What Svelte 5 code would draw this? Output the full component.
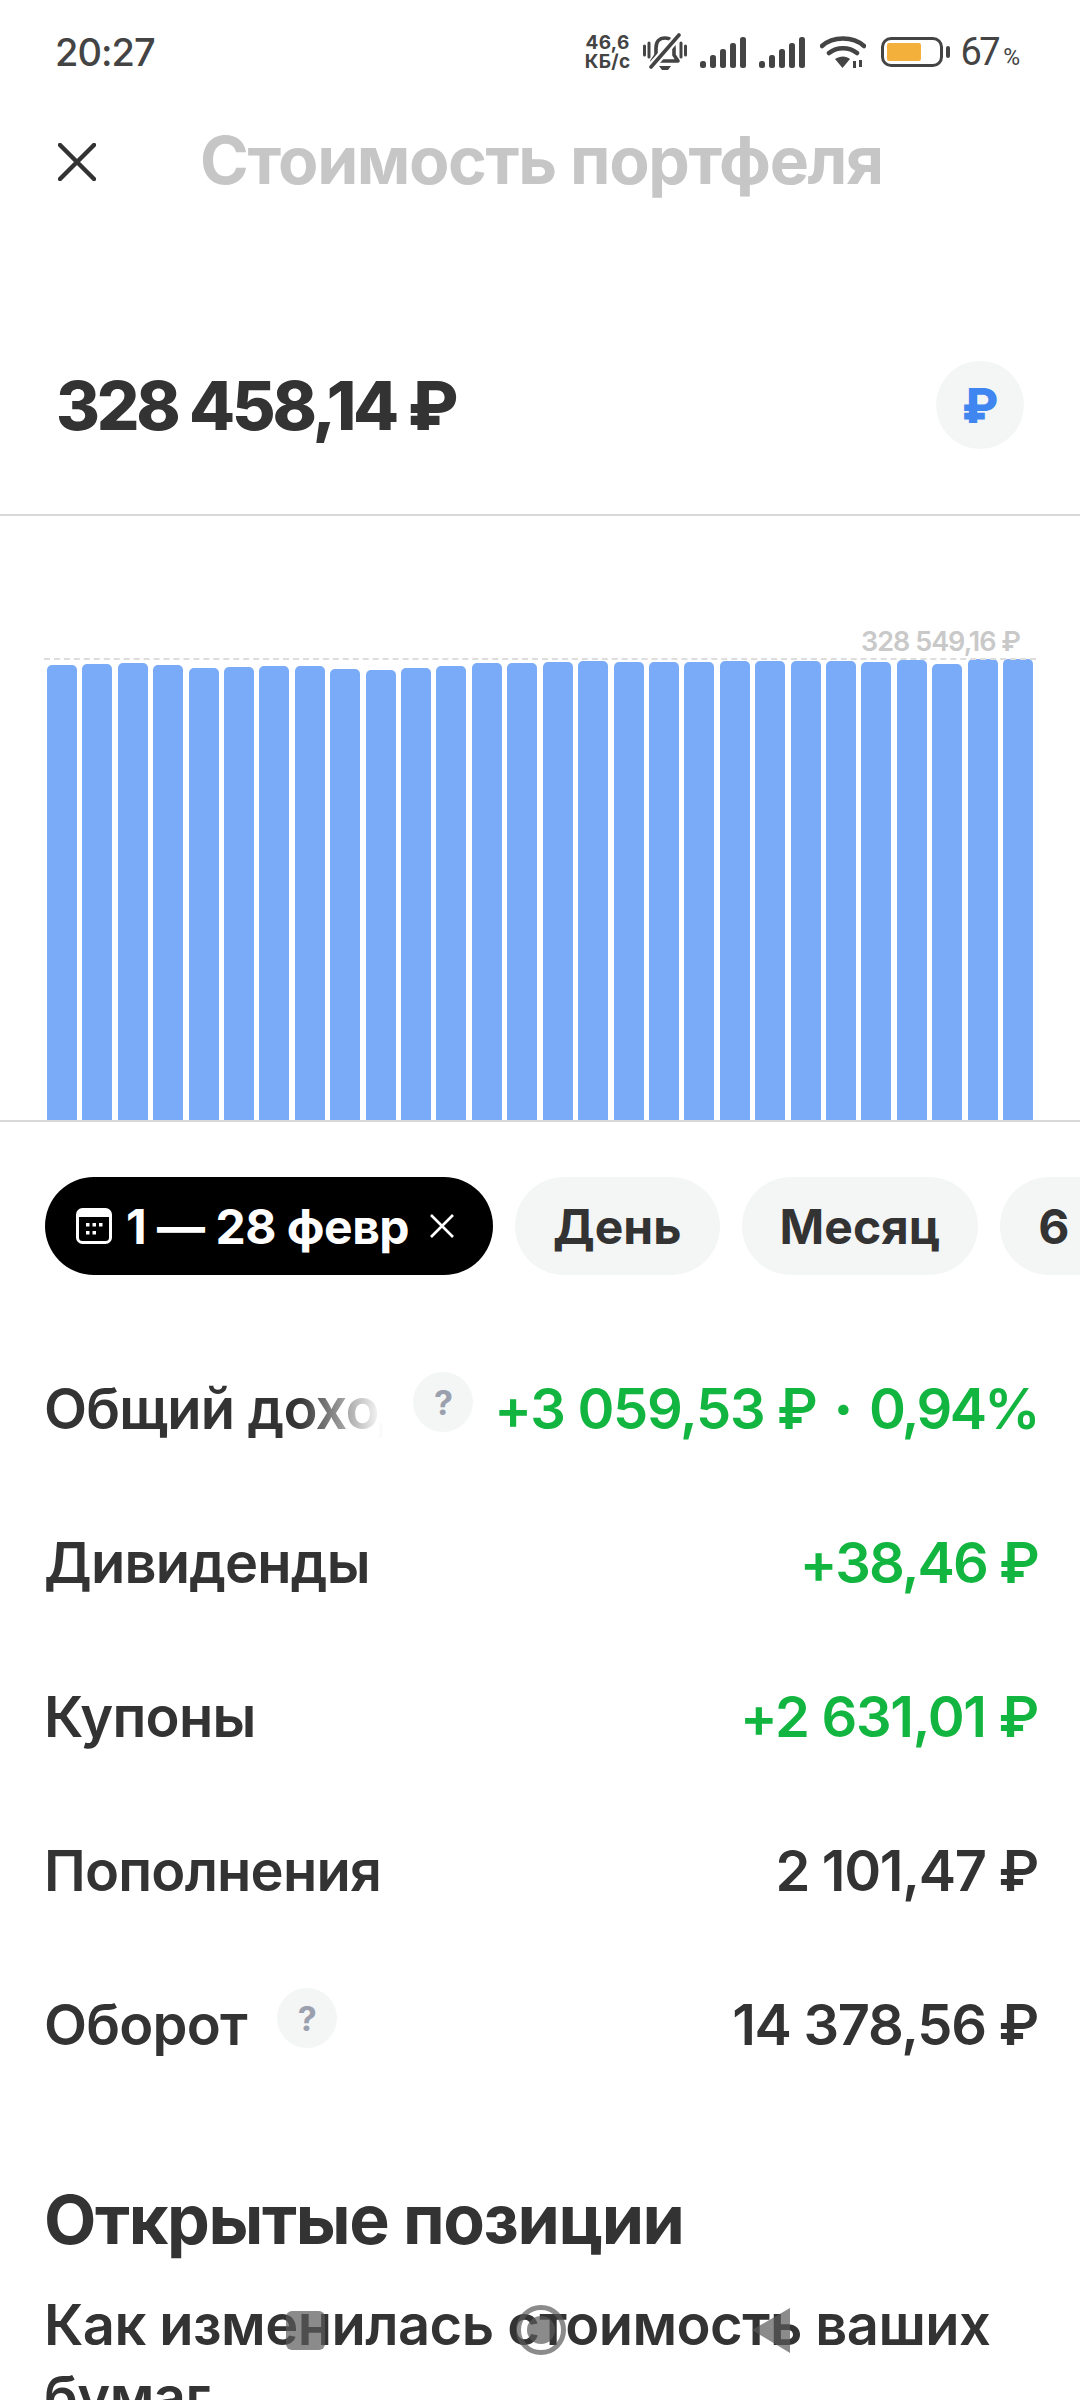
<script lang="ts">
// daily portfolio value, one bar per day: top of bar in px below chart start
const tops = [7, 6.3, 5, 7, 9.7, 9, 8, 8, 11, 11.7, 10, 8.3, 5, 4.7, 4, 3, 4.3, 3.7, 4, 3, 3.3, 3, 3, 4, 1.7, 6, 1, 1];
const chartHeight = 462;

const rows = [
	{ label: 'Общий доход', value: '+3 059,53 ₽', percent: '0,94%', green: true, help: true, fade: true },
	{ label: 'Дивиденды', value: '+38,46 ₽', green: true, tight: true },
	{ label: 'Купоны', value: '+2 631,01 ₽', green: true },
	{ label: 'Пополнения', value: '2 101,47 ₽' },
	{ label: 'Оборот', value: '14 378,56 ₽', help: true }
];
</script>

<div class="screen">
	<div class="status">
		<span class="time">20:27</span>
		<div class="status-icons">
			<span class="speed"><span>46,6</span><span>КБ/с</span></span>
			<svg class="bell" width="44" height="38" viewBox="0 0 44 38">
				<path d="M22 5c-6 0-9 4-9 10v7l-4 6h26l-4-6v-7c0-6-3-10-9-10z" fill="none" stroke="#444" stroke-width="3.6" stroke-linejoin="round" />
				<path d="M16 33h12l-3 4h-6z" fill="#444" />
				<path d="M1.500 13v9M6 10v14M38 10v14M42.500 13v9" stroke="#444" stroke-width="3" stroke-linecap="round" />
				<path d="M8 34 36 2" stroke="#fff" stroke-width="8" />
				<path d="M8 34 36 2" stroke="#444" stroke-width="3.600" stroke-linecap="round" />
			</svg>
			<svg class="signal" width="46" height="31" viewBox="0 0 46 31">
				<rect x="0" y="24" width="6" height="7" rx="2.500" /><rect x="10" y="18" width="6" height="13" rx="2.500" /><rect x="20" y="12" width="6" height="19" rx="2.500" /><rect x="30" y="6" width="6" height="25" rx="2.500" /><rect x="40" y="0" width="6" height="31" rx="2.500" />
			</svg>
			<svg class="signal" width="46" height="31" viewBox="0 0 46 31">
				<rect x="0" y="24" width="6" height="7" rx="2.500" /><rect x="10" y="18" width="6" height="13" rx="2.500" /><rect x="20" y="12" width="6" height="19" rx="2.500" /><rect x="30" y="6" width="6" height="25" rx="2.500" /><rect x="40" y="0" width="6" height="31" rx="2.500" />
			</svg>
			<svg class="wifi" width="46" height="33" viewBox="0 0 46 33">
				<path d="M2 10C13 0 33 0 44 10M9 17c8-6.500 20-6.500 28 0" fill="none" stroke="#444" stroke-width="4.500" stroke-linecap="round" />
				<path d="M15 23c5-3.500 11-3.500 15 0l-7.500 9z" fill="#444" />
				<path d="M33 25h3v7h-3zM39 24h3v7h-3z" fill="#444" />
			</svg>
			<div class="battery"><div class="battery-level"></div></div>
			<span class="battery-nub"></span>
			<span class="percent">67<small>%</small></span>
		</div>
	</div>

	<header class="header">
		<svg class="close" width="38" height="38" viewBox="0 0 38 38">
			<path d="M2 2 36 36M36 2 2 36" stroke="#333" stroke-width="4.500" stroke-linecap="round" />
		</svg>
		<h1>Стоимость портфеля</h1>
	</header>

	<section class="total">
		<span class="total-value">328 458,14 ₽</span>
		<span class="currency">₽</span>
	</section>

	<section class="chart">
		<div class="max-label">328 549,16 ₽</div>
		<div class="max-line"></div>
		<div class="bars" style:height="{chartHeight}px">
			{#each tops as top}
				<div class="bar" style:height="{chartHeight - top}px"></div>
			{/each}
		</div>
	</section>

	<nav class="periods">
		<button class="pill active">
			<svg width="36" height="36" viewBox="0 0 36 36">
				<rect x="1.500" y="1.500" width="33" height="33" rx="5" fill="none" stroke="#fff" stroke-width="3" />
				<path d="M2 3h32v6H2z" fill="#fff" />
				<g fill="#fff"><rect x="10" y="15" width="3.500" height="3.500" /><rect x="16.500" y="15" width="3.500" height="3.500" /><rect x="23" y="15" width="3.500" height="3.500" /><rect x="10" y="23" width="3.500" height="3.500" /><rect x="16.500" y="23" width="3.500" height="3.500" /></g>
			</svg>
			<span>1 — 28 февр</span>
			<svg class="pill-close" width="26" height="26" viewBox="0 0 26 26">
				<path d="M2 2 24 24M24 2 2 24" stroke="#fff" stroke-width="2.600" />
			</svg>
		</button>
		<button class="pill">День</button>
		<button class="pill">Месяц</button>
		<button class="pill">6 месяцев</button>
	</nav>

	<section class="rows">
		{#each rows as row}
			<div class="row">
				<div class="row-label">
					<span class:fade={row.fade}>{row.label}</span>
					{#if row.help}<span class="help">?</span>{/if}
				</div>
				<span class="row-value" class:green={row.green} class:tight={row.tight}>
					{row.value}{#if row.percent}<span class="dot">·</span><span class="pct">{row.percent}</span>{/if}
				</span>
			</div>
		{/each}
	</section>

	<section class="positions">
		<h2>Открытые позиции</h2>
		<p>Как изменилась стоимость ваших бумаг</p>
	</section>

	<div class="nav-buttons">
		<span class="nav-square"></span>
		<span class="nav-circle"><span></span></span>
		<svg class="nav-back" width="38" height="45" viewBox="0 0 38 45"><path d="M38 0v45L0 22z" /></svg>
	</div>
</div>

<style>
	:global(body) {
		margin: 0;
		background: #fff;
	}

	.screen {
		position: relative;
		width: 1080px;
		height: 2400px;
		overflow: hidden;
		background: #fff;
		color: #333;
		font-family: Inter, 'Noto Sans', 'DejaVu Sans', sans-serif;
	}

	.status {
		display: flex;
		justify-content: space-between;
		align-items: center;
		height: 104px;
		padding: 0 60px 0 55px;
		box-sizing: border-box;
	}

	.time {
		font-size: 38px;
		font-weight: 500;
		color: #444;
		letter-spacing: -1px;
	}

	.status-icons {
		display: flex;
		align-items: center;
		color: #444;
	}

	.speed {
		display: flex;
		flex-direction: column;
		align-items: center;
		font-size: 19px;
		font-weight: 700;
		letter-spacing: 0.300px;
		line-height: 19px;
		margin-right: 13px;
	}

	.bell {
		margin-right: 13px;
	}

	.signal {
		fill: #444;
		margin-right: 13px;
	}

	.wifi {
		margin-left: 2px;
		margin-right: 15px;
	}

	.battery {
		width: 62px;
		height: 30px;
		box-sizing: border-box;
		border: 3.500px solid #444;
		border-radius: 10px;
		padding: 3px;
	}

	.battery-level {
		width: 34px;
		height: 100%;
		background: #f3b13c;
		border-radius: 2px;
	}

	.battery-nub {
		width: 4px;
		height: 12px;
		margin-left: 3px;
		border-radius: 2px;
		background: #444;
	}

	.percent {
		margin-left: 10px;
		font-family: Roboto, sans-serif;
		font-size: 38px;
		font-weight: 400;
		letter-spacing: -2.500px;
	}

	.percent small {
		font-size: 23px;
		margin-left: 5px;
		letter-spacing: 0;
	}

	.header {
		display: flex;
		align-items: center;
		height: 116px;
		padding-left: 58px;
	}

	h1 {
		margin: 0 0 0 104px;
		padding-bottom: 4px;
		font-size: 66px;
		font-weight: 700;
		letter-spacing: -1.400px;
		color: #c6c6c6;
		white-space: nowrap;
	}

	.total {
		display: flex;
		justify-content: space-between;
		align-items: center;
		height: 296px;
		padding: 76px 56px 0 56px;
		box-sizing: border-box;
		border-bottom: 2px solid #d8d8d8;
	}

	.total-value {
		font-size: 67px;
		font-weight: 800;
		letter-spacing: -3.200px;
		white-space: nowrap;
	}

	.currency {
		display: flex;
		align-items: center;
		justify-content: center;
		width: 88px;
		height: 88px;
		border-radius: 50%;
		background: #f4f6f6;
		color: #3f86f0;
		font-size: 48px;
		font-weight: 800;
	}

	.chart {
		position: relative;
		display: flex;
		align-items: flex-end;
		height: 606px;
		padding: 0 47px;
		box-sizing: border-box;
		border-bottom: 2px solid #d8d8d8;
	}

	.max-label {
		position: absolute;
		right: 60px;
		top: 109px;
		font-size: 27px;
		font-weight: 600;
		letter-spacing: -1px;
		color: #c9c9c9;
		white-space: nowrap;
	}

	.max-line {
		position: absolute;
		left: 44px;
		right: 44px;
		top: 142px;
		border-top: 2px dashed #ddd;
	}

	.bars {
		display: flex;
		align-items: flex-end;
		justify-content: space-between;
		width: 100%;
	}

	.bar {
		width: 30px;
		background: #7aabf8;
		border-radius: 5px 5px 0 0;
	}

	.periods {
		display: flex;
		gap: 22px;
		margin-top: 55px;
		padding-left: 45px;
		white-space: nowrap;
	}

	.pill {
		display: flex;
		flex: none;
		align-items: center;
		height: 98px;
		padding: 0 38px;
		border: none;
		border-radius: 49px;
		background: #f4f6f6;
		color: #333;
		font: 700 48px Inter, 'Noto Sans', sans-serif;
	}

	.pill.active {
		gap: 14px;
		padding: 0 38px 0 31px;
		background: #000;
		color: #fff;
	}

	.pill.active span {
		letter-spacing: -0.500px;
	}

	.pill-close {
		margin-left: 6px;
	}

	.rows {
		display: flex;
		flex-direction: column;
		margin-top: 57px;
		padding: 0 42px 0 44px;
	}

	.row {
		display: flex;
		justify-content: space-between;
		align-items: center;
		height: 154px;
		font-size: 56px;
		font-weight: 600;
		letter-spacing: -0.800px;
		white-space: nowrap;
	}

	.row-label {
		display: flex;
		align-items: center;
	}

	.fade {
		display: block;
		width: 339px;
		overflow: hidden;
		-webkit-mask-image: linear-gradient(to right, #000 75%, transparent 100%);
		mask-image: linear-gradient(to right, #000 75%, transparent 100%);
	}

	.help {
		display: flex;
		align-items: center;
		justify-content: center;
		width: 60px;
		height: 60px;
		margin: -14px 0 0 30px;
		border-radius: 50%;
		background: #f4f6f6;
		color: #9aa0ad;
		font-size: 34px;
		font-weight: 700;
	}

	.row-value {
		font-weight: 600;
		letter-spacing: -1.300px;
	}

	.row-value.tight {
		letter-spacing: -1.900px;
	}

	.dot {
		margin: 0 17px;
		font-weight: 800;
	}

	.pct {
		letter-spacing: -2.600px;
	}

	.green {
		color: #12b53f;
	}

	.positions {
		margin-top: 78px;
		padding: 0 44px;
	}

	h2 {
		margin: 0;
		font-size: 68px;
		font-weight: 700;
		letter-spacing: -1.400px;
		line-height: 78px;
	}

	.positions p {
		margin: 31px 0 0;
		font-size: 56px;
		font-weight: 600;
		letter-spacing: -0.550px;
		line-height: 72px;
	}

	.nav-buttons {
		position: absolute;
		left: 286px;
		top: 2305px;
		display: flex;
		align-items: center;
		gap: 191px;
	}

	.nav-square {
		width: 39px;
		height: 39px;
		border-radius: 6px;
		background: rgba(90, 90, 90, 0.7);
	}

	.nav-circle {
		display: flex;
		align-items: center;
		justify-content: center;
		width: 50px;
		height: 50px;
		box-sizing: border-box;
		border: 5px solid rgba(90, 90, 90, 0.7);
		border-radius: 50%;
	}

	.nav-circle span {
		width: 28px;
		height: 28px;
		border-radius: 50%;
		background: rgba(90, 90, 90, 0.7);
	}

	.nav-back {
		margin-left: -5px;
		fill: rgba(90, 90, 90, 0.7);
	}
</style>
